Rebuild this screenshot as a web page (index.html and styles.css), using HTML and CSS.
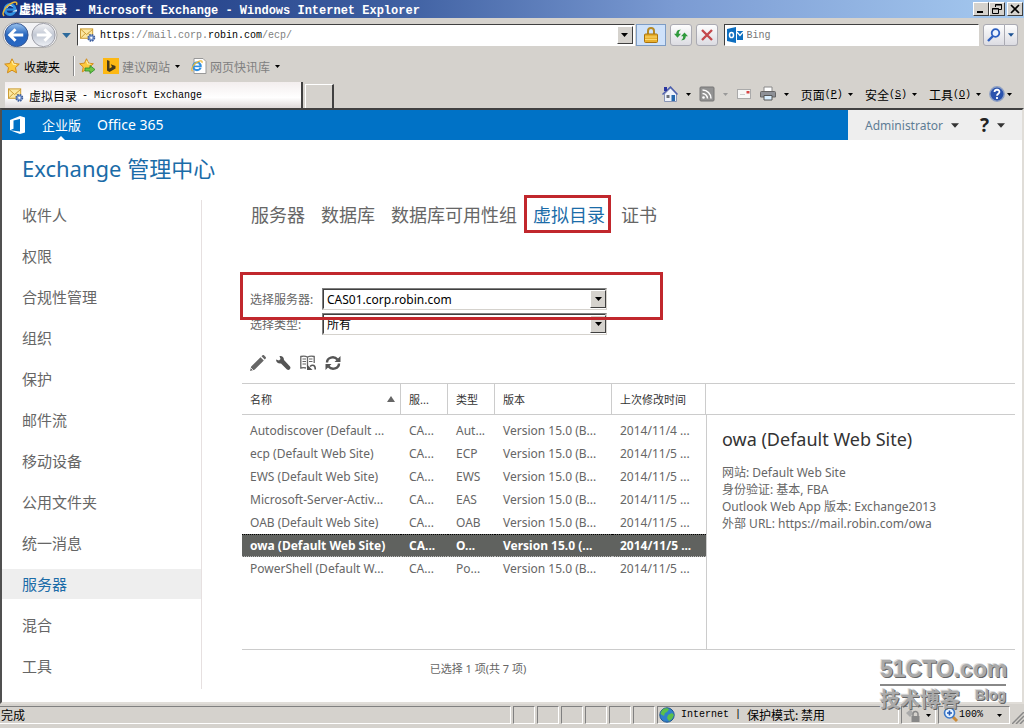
FILE: index.html
```html
<!DOCTYPE html>
<html lang="zh-CN">
<head>
<meta charset="utf-8">
<title>虚拟目录 - Microsoft Exchange</title>
<link rel="stylesheet" href="styles.css">
</head>
<body>
<svg class="defs" aria-hidden="true">
  <symbol id="ie" viewBox="0 0 16 16">
    <circle cx="8" cy="8.500" r="5" fill="none" stroke="#2f8fe0" stroke-width="3"/>
    <path d="M4 8.500h9" stroke="#2f8fe0" stroke-width="2.200"/>
    <path d="M10 10.500h5v-2z" fill="#d6e4f2"/>
    <path d="M5 7a3.200 3.200 0 0 1 5.500-1.500" stroke="#bfe4ff" fill="none"/>
    <path d="M2 15C-1 12 4 4 11 1.500c3-1 4.500 0 3.500 2.500" fill="none" stroke="#e8b637" stroke-width="1.500"/>
  </symbol>
  <symbol id="mail" viewBox="0 0 17 16">
    <rect x=".5" y="1.500" width="13" height="10" fill="#fbe7a0" stroke="#c9982e"/>
    <path d="M1 2l6 5.500L13.500 2M1 11l4.500-4.500M13 11L9 6.500" fill="none" stroke="#c9982e"/>
    <circle cx="12" cy="11" r="3.300" fill="#7d9bd0" stroke="#3f5f9d" stroke-width="1.800" stroke-dasharray="1.600 1"/>
    <circle cx="12" cy="11" r="1.200" fill="#fff"/>
  </symbol>
  <symbol id="down" viewBox="0 0 7 4"><path d="M0 0h7L3.500 4z" fill="currentColor"/></symbol>
  <symbol id="star" viewBox="0 0 16 16"><path d="M8 .8l2.200 4.700 5.100.6-3.800 3.500 1 5.200L8 12.200l-4.500 2.600 1-5.200L.7 6.100l5.100-.6z" fill="#fdc93d" stroke="#d08a1a"/><path d="M8 3l1.300 3.200 3 .4" fill="none" stroke="#fff0a8" stroke-width="1.200"/></symbol>
</svg>

<header class="chrome">
  <div class="titlebar">
    <svg class="i16"><use href="#ie"/></svg>
    <span class="title"><b class="cj">虚拟目录</b> - Microsoft Exchange - Windows Internet Explorer</span>
    <div class="winbtns">
      <button class="win" aria-label="最小化"><svg viewBox="0 0 12 10"><path d="M2 8h6" stroke="#000" stroke-width="2"/></svg></button>
      <button class="win" aria-label="还原"><svg viewBox="0 0 12 10"><path d="M4.500 3V.5h6v5H8M4 1h7M1.500 4.500h6v5h-6zM1 5h7" fill="none" stroke="#000"/></svg></button>
      <button class="win win-x" aria-label="关闭"><svg viewBox="0 0 12 10"><path d="M2 1l8 8M10 1L2 9" stroke="#000" stroke-width="1.700"/></svg></button>
    </div>
  </div>

  <div class="navbar">
    <div class="navbtns">
      <svg class="nav-arrows" viewBox="0 0 58 28" aria-hidden="true">
        <defs><linearGradient id="gb" x2="0" y2="1"><stop stop-color="#9cc4ef"/><stop offset=".5" stop-color="#2464bd"/><stop offset="1" stop-color="#2a68c4"/></linearGradient>
        <linearGradient id="gg" x2="0" y2="1"><stop stop-color="#f4f4f6"/><stop offset=".5" stop-color="#c2c8d4"/><stop offset="1" stop-color="#eef1f6"/></linearGradient></defs>
        <rect x="1" y="1" width="56" height="26" rx="13" fill="#f3f3f5" stroke="#aaa9a8"/>
        <circle cx="15" cy="14" r="12" fill="url(#gb)" stroke="#36558f"/>
        <path d="M8 14h14M14 8l-6 6 6 6" fill="none" stroke="#fff" stroke-width="3"/>
        <circle cx="43" cy="14" r="12" fill="url(#gg)" stroke="#9a9ca5"/>
        <path d="M36 14h14M44 8l6 6-6 6" fill="none" stroke="#fff" stroke-width="3"/>
      </svg>
      <svg class="tri-big"><use href="#down"/></svg>
    </div>
    <div class="address sunken">
      <svg class="i16"><use href="#mail"/></svg>
      <div class="url mono"><span class="dark">https</span>://mail.corp.<span class="dark">robin.com</span>/ecp/</div>
      <button class="drop" aria-label="地址列表"><svg class="tri"><use href="#down"/></svg></button>
    </div>
    <button class="lock" aria-label="安全报告"><svg viewBox="0 0 14 16"><path d="M4 8V4a3 3 0 0 1 6 0v4" fill="none" stroke="#b58a28" stroke-width="2"/><rect x=".5" y="7" width="13" height="8.500" rx="1" fill="#e8b02e" stroke="#a8720f"/><path d="M1 10h12M1 12.500h12" stroke="#fbd873"/></svg></button>
    <button class="soft" aria-label="刷新"><svg viewBox="0 0 16 14"><path d="M0 5.500h2.500C2.500 2.500 4.500.5 8 1 6 2 5.500 3.500 5.500 5.500H8L4 10z" fill="#2f9a3c"/><path d="M16 8.500h-2.500c0 3-2 5-5.500 4.500 2-1 2.500-2.500 2.500-4.500H8L12 4z" fill="#2f9a3c"/></svg></button>
    <button class="soft" aria-label="停止"><svg viewBox="0 0 14 14"><path d="M2 2l10 10M12 2L2 12" stroke="#c4484b" stroke-width="2.400"/></svg></button>
    <label class="search sunken">
      <svg class="i16" viewBox="0 0 16 16"><path d="M0 2l9-2v16l-9-2z" fill="#0e6fc0"/><path d="M10 4h6v9h-6z" fill="#0e6fc0"/><path d="M10 5l3 3.500L16 5" fill="none" stroke="#fff" stroke-width="1.300"/><ellipse cx="4.500" cy="8" rx="2" ry="2.600" fill="none" stroke="#fff" stroke-width="1.500"/></svg>
      <input class="mono" type="text" placeholder="Bing" aria-label="搜索">
    </label>
    <div class="go">
      <button class="soft wide" aria-label="搜索"><svg viewBox="0 0 14 14"><circle cx="8.500" cy="5" r="3.800" fill="#eaf3ff" stroke="#2c5fc0" stroke-width="1.800"/><path d="M6 8l-5 5" stroke="#2c5fc0" stroke-width="2.400"/></svg></button>
      <button class="soft narrow" aria-label="搜索选项"><svg class="tri"><use href="#down"/></svg></button>
    </div>
  </div>

  <div class="favbar">
    <svg class="i16"><use href="#star"/></svg><span class="cj">收藏夹</span>
    <i class="sep"></i>
    <svg class="i16" viewBox="0 0 16 16"><use href="#star" width="15" height="15"/><path d="M6 10h5V7.500l5 4-5 4V13H6z" fill="#6cc644" stroke="#2c8a2c" stroke-width=".8"/></svg>
    <svg class="i16 gap-s" viewBox="0 0 16 16"><path d="M0 0h16v16H0z" fill="#fdb813"/><path d="M4 2l2.500 1v7.500L9 9 7.800 6.200 12.500 8v2.500L6.500 14 4 12.500z" fill="#453a1c"/></svg>
    <span class="cj dim">建议网站</span><svg class="tri s"><use href="#down"/></svg>
    <svg class="i16 gap-m" viewBox="0 0 16 16"><path d="M3 .5h9l3 3v12H3z" fill="#fff" stroke="#999"/><use href="#ie" y="2" width="12" height="12"/></svg>
    <span class="cj dim">网页快讯库</span><svg class="tri s"><use href="#down"/></svg>
  </div>

  <div class="tabbar">
    <div class="tab"><svg class="i16"><use href="#mail"/></svg><span class="cj">虚拟目录</span><span class="mono">- Microsoft Exchange</span></div>
    <div class="newtab"></div>
    <div class="cmds">
      <svg class="i16" viewBox="0 0 16 16"><path d="M2.500 8v7.500h12V8L8.500 2z" fill="#eef2fb" stroke="#8794b5"/><path d="M.5 8.500l8-7.500 7 7.500" fill="none" stroke="#4d5fae" stroke-width="1.500"/><path d="M2 1h3v4H2z" fill="#2a35a0"/><path d="M9.500 9H13v6H9.500z" fill="#2768ad"/><path d="M4.500 9h3v3h-3z" fill="#6b7077"/></svg>
      <svg class="tri"><use href="#down"/></svg>
      <svg class="i16" viewBox="0 0 16 16"><rect x="1" y="1" width="14" height="14" rx="1" fill="#929292" stroke="#777"/><circle cx="4.500" cy="11.500" r="1.300" fill="#fff"/><path d="M3.500 7.500a5 5 0 0 1 5 5M3.500 4a8.500 8.500 0 0 1 8.500 8.500" fill="none" stroke="#fff" stroke-width="1.500"/></svg>
      <svg class="tri pale"><use href="#down"/></svg>
      <svg class="i16" viewBox="0 0 16 16"><rect x="1.500" y="3.500" width="13" height="9" fill="#f7f7f7" stroke="#aaa"/><path d="M10.500 5h3v2.500h-3z" fill="#d64545"/><path d="M4 8.500h5" stroke="#ccc"/></svg>
      <svg class="i16" viewBox="0 0 16 16"><path d="M4 1h8v5H4z" fill="#fff" stroke="#888"/><path d="M.5 6.500a1 1 0 0 1 1-1h13a1 1 0 0 1 1 1V11H.5z" fill="#8e9197" stroke="#666"/><path d="M4 9.500h8V14H4z" fill="#d9efff" stroke="#555"/></svg>
      <svg class="tri"><use href="#down"/></svg>
      <button class="cmd"><span class="cj">页面</span><span class="mono">(<u>P</u>)</span><svg class="tri s"><use href="#down"/></svg></button>
      <button class="cmd"><span class="cj">安全</span><span class="mono">(<u>S</u>)</span><svg class="tri s"><use href="#down"/></svg></button>
      <button class="cmd"><span class="cj">工具</span><span class="mono">(<u>O</u>)</span><svg class="tri s"><use href="#down"/></svg></button>
      <button class="cmd help" aria-label="帮助"><svg class="i16" viewBox="0 0 16 16"><circle cx="8" cy="8" r="7.200" fill="#2b53ad" stroke="#8ea0c4" stroke-width="1.400"/><path d="M5.500 6c.3-3.300 5.300-2.800 4.900.2C10.200 7.800 8 7.700 8 9.800M8 11v2" fill="none" stroke="#fff" stroke-width="1.800"/></svg><svg class="tri s"><use href="#down"/></svg></button>
    </div>
  </div>
</header>

<div class="page">
  <div class="suite">
    <nav class="suite-blue">
      <svg class="office" viewBox="0 0 16 18"><path d="M0 4l10-4 5 1.500v15L10 18 0 14.200l10 1.300V3L3.500 4.600v8.200L0 14.200z" fill="#fff"/></svg>
      <a class="on" href="#">企业版</a>
      <a class="o365" href="#">Office 365</a>
    </nav>
    <div class="suite-user">
      <button class="user">Administrator<svg class="tri-big"><use href="#down"/></svg></button>
      <button class="user q">?<svg class="tri-big"><use href="#down"/></svg></button>
    </div>
  </div>
  <h1>Exchange 管理中心</h1>
  <div class="cols">
    <nav class="side">
      <a href="#">收件人</a><a href="#">权限</a><a href="#">合规性管理</a><a href="#">组织</a><a href="#">保护</a><a href="#">邮件流</a><a href="#">移动设备</a><a href="#">公用文件夹</a><a href="#">统一消息</a><a class="cur" href="#">服务器</a><a href="#">混合</a><a href="#">工具</a>
    </nav>
    <main>
      <nav class="tabs">
        <a href="#">服务器</a><a href="#">数据库</a><a href="#">数据库可用性组</a><a class="cur" href="#">虚拟目录</a><a href="#">证书</a>
      </nav>
      <form class="filters">
        <label for="srv">选择服务器:</label>
        <div class="pick"><select id="srv"><option>CAS01.corp.robin.com</option></select><span class="drop"><svg class="tri"><use href="#down"/></svg></span></div>
        <label for="typ">选择类型:</label>
        <div class="pick"><select id="typ"><option>所有</option></select><span class="drop"><svg class="tri"><use href="#down"/></svg></span></div>
        <div class="mark"></div>
      </form>
      <div class="tools">
        <button aria-label="编辑"><svg viewBox="0 0 16 16"><path d="M0 16l1.200-4.500L10.500 2.200l3.300 3.300-9.300 9.300zM11.500 1.300l1-1c.5-.4 1-.4 1.500 0L15.700 2c.4.500.4 1 0 1.500l-1 1z" fill="#666"/><path d="M.8 12.800l2.400 2.400" stroke="#fff" stroke-width=".8"/></svg></button>
        <button aria-label="属性"><svg viewBox="0 0 16 16"><path d="M1 4.500L4 5.500 5.500 4 4.500 1C7 .6 9 2 9 5l6 6.500c1.500 2-1 4.500-3 3L6 8.500C3.500 9 1 7.500 1 4.500z" fill="#555"/></svg></button>
        <button aria-label="重置"><svg viewBox="0 0 16 16"><path d="M7.500 2v9.500M7.500 2C5.500 1 3 1 .8 1.500V13c2-.4 3.600-.4 5.200 0M7.500 2c2-1 4.500-1 6.700-.5V8" fill="none" stroke="#666" stroke-width="1.300"/><path d="M2.500 4H6M2.500 6.500H6M2.500 9H6M9 4h3.500M9 6.500h3.500" stroke="#666" stroke-width="1.200"/><path d="M15.200 14.500c.3-4-2.200-5.500-5.200-3" fill="none" stroke="#555" stroke-width="1.600"/><path d="M7 9.500l5.500 5.500H7z" fill="#555"/></svg></button>
        <button aria-label="刷新"><svg viewBox="0 0 16 16"><path d="M2 7.500C2 2.500 9 .5 12.500 4.500M14 8.500c0 5-7 7-10.500 3" fill="none" stroke="#555" stroke-width="2.400"/><path d="M15.500 1v6H9.500zM.5 15V9h6z" fill="#555"/></svg></button>
      </div>
      <div class="split">
        <table>
          <colgroup><col class="c1"><col class="c2"><col class="c2"><col class="c4"><col></colgroup>
          <thead><tr><th>名称<svg class="sort" viewBox="0 0 8 6"><path d="M4 0l4 6H0z" fill="#666"/></svg></th><th>服...</th><th>类型</th><th>版本</th><th>上次修改时间</th></tr></thead>
          <tbody>
            <tr><td>Autodiscover (Default ...</td><td>CA...</td><td>Aut...</td><td>Version 15.0 (B...</td><td>2014/11/4 ...</td></tr>
            <tr><td>ecp (Default Web Site)</td><td>CA...</td><td>ECP</td><td>Version 15.0 (B...</td><td>2014/11/5 ...</td></tr>
            <tr><td>EWS (Default Web Site)</td><td>CA...</td><td>EWS</td><td>Version 15.0 (B...</td><td>2014/11/5 ...</td></tr>
            <tr><td>Microsoft-Server-Activ...</td><td>CA...</td><td>EAS</td><td>Version 15.0 (B...</td><td>2014/11/5 ...</td></tr>
            <tr><td>OAB (Default Web Site)</td><td>CA...</td><td>OAB</td><td>Version 15.0 (B...</td><td>2014/11/5 ...</td></tr>
            <tr class="sel"><td>owa (Default Web Site)</td><td>CA...</td><td>O...</td><td>Version 15.0 (...</td><td>2014/11/5 ...</td></tr>
            <tr><td>PowerShell (Default W...</td><td>CA...</td><td>Po...</td><td>Version 15.0 (B...</td><td>2014/11/5 ...</td></tr>
          </tbody>
        </table>
        <section class="detail">
          <div class="detail-head"></div>
          <div class="detail-body">
            <h2>owa (Default Web Site)</h2>
            <p>网站: Default Web Site</p>
            <p>身份验证: 基本, FBA</p>
            <p>Outlook Web App 版本: Exchange2013</p>
            <p>外部 URL: https://mail.robin.com/owa</p>
          </div>
        </section>
      </div>
      <div class="count">已选择 1 项(共 7 项)</div>
    </main>
  </div>
</div>

<footer class="status">
  <div class="cell done">完成</div>
  <div class="cell box"></div><div class="cell box"></div><div class="cell box"></div><div class="cell box"></div><div class="cell box"></div><div class="cell box"></div>
  <div class="cell zone"><svg class="i16" viewBox="0 0 16 16"><circle cx="8" cy="8" r="7.200" fill="#2f7fcb" stroke="#1f568f"/><path d="M3 3c3-2.500 6-2 7-.5L8 5 6 6 5 9 1.500 7zM9 8l4-2 2 2-2 4-3 2-2-3z" fill="#5cc04a"/></svg><span class="mono">Internet |</span><span>保护模式: 禁用</span></div>
  <div class="cell prot"><svg class="i16" viewBox="0 0 16 16"><path d="M1 6l5-4 2 5-3 3z" fill="#aaa"/><path d="M8 9V7a2.500 2.500 0 0 1 5 0v2" fill="none" stroke="#888" stroke-width="1.500"/><path d="M6.500 9h8v6h-8z" fill="#888"/></svg><svg class="tri s"><use href="#down"/></svg></div>
  <div class="cell zoomc"><svg class="i16" viewBox="0 0 16 16"><path d="M9 9l5 5" stroke="#c98a3a" stroke-width="3"/><circle cx="6.500" cy="6" r="5" fill="#e8f4ff" stroke="#3c78c8" stroke-width="1.600"/><path d="M4 6h5M6.500 3.500v5" stroke="#2159b5" stroke-width="1.600"/></svg><span class="mono">100%</span><svg class="tri s"><use href="#down"/></svg></div>
  <svg class="grip" viewBox="0 0 12 12"><path d="M0 12L12 0M4 12l8-8M8 12l4-4" stroke="#888" stroke-width="1.500"/></svg>
</footer>

<div class="watermark" aria-hidden="true">
  <div class="wm1">51CTO.com</div>
  <div class="wm2"><span>技术博客</span><b>Blog</b></div>
</div>
</body>
</html>
```
FILE: styles.css
```css
*, *::before, *::after { box-sizing: border-box; }
body {
  margin: 0;
  min-height: 100vh;
  display: flex;
  flex-direction: column;
  position: relative;
  background: #d5d2cd;
  color: #000;
  font: 12px "Noto Sans", "Noto Sans CJK SC", sans-serif;
}
button, input, select { font: inherit; color: inherit; margin: 0; padding: 0; border: 0; background: none; }
a { color: inherit; text-decoration: none; }
h1, h2, p { margin: 0; font-weight: 400; }
.defs { position: absolute; width: 0; height: 0; }
.i16 { width: 16px; height: 16px; flex: none; }
.tri { width: 5px; height: 3px; flex: none; }
.tri-big { width: 8px; height: 5px; flex: none; }
.mono { font-family: "Liberation Mono", "Noto Sans CJK SC", monospace; font-size: 10px; }
.cj { font-size: 12px; font-family: "Noto Sans CJK SC", sans-serif; }

/* browser chrome */
.titlebar {
  height: 18px;
  display: flex;
  align-items: center;
  gap: 1px;
  padding: 0 1px 0 2px;
  background: linear-gradient(90deg, #15307c, #3d5ea0 38%, #7b9bd3 66%, #a6caf0);
}
.title { color: #fff; font: bold 12px "Liberation Mono", monospace; white-space: nowrap; flex: 1; }
.winbtns { display: flex; }
.win { width: 16px; height: 14px; background: #d5d2cd; border: 1px solid; border-color: #fff #404040 #404040 #fff; display: grid; place-items: center; }
.win svg { width: 12px; height: 10px; }
.win-x { margin-left: 2px; }

.navbar { height: 34px; display: flex; align-items: center; padding: 0 6px 0 2px; }
.navbtns { width: 75px; display: flex; align-items: center; justify-content: space-between; padding-right: 6px; }
.nav-arrows { width: 56px; height: 28px; }
.navbtns .tri-big { color: #2d6a9c; width: 9px; }
.sunken { background: #fff; border: 1px solid; border-color: #404040 #fff #fff #404040; height: 22px; display: flex; align-items: center; }
.address { flex: 558; padding: 0 1px 0 2px; gap: 4px; }
.url { flex: 1; color: #808080; }
.dark { color: #000; }
.drop { width: 16px; height: 18px; background: #d5d2cd; border: 1px solid; border-color: #fff #404040 #404040 #fff; display: grid; place-items: center; color: #000; }
.drop .tri { width: 7px; height: 4px; }
.lock { width: 30px; height: 22px; margin: 0 4px 0 1px; background: #cfe2fa; border: 1px solid #7d9cc4; display: grid; place-items: center; }
.lock svg { width: 14px; height: 16px; }
.soft { width: 22px; height: 22px; margin-right: 4px; border: 1px solid #aaaab2; border-radius: 3px; background: linear-gradient(#fdfdfd, #dcdce2); display: grid; place-items: center; }
.soft svg { width: 14px; height: 14px; }
.search { flex: 254; margin: 0 4px 0 2px; padding-left: 2px; gap: 4px; }
.search input { flex: 1; min-width: 0; outline: 0; }
.search input::placeholder { color: #777; opacity: 1; }
.go { display: flex; }
.go .wide { margin: 0; border-radius: 3px 0 0 3px; }
.go .narrow { width: 13px; margin: 0; border-left: 0; border-radius: 0 3px 3px 0; }
.soft .tri { width: 6px; height: 4px; color: #1d5292; }

.favbar { height: 28px; display: flex; align-items: center; padding-left: 4px; }
.favbar .cj { margin-left: 4px; }
.sep { width: 2px; height: 20px; margin: 0 4px 0 13px; border-left: 1px solid #888; border-right: 1px solid #fff; }
.favbar .dim { color: #808080; margin-left: 3px; }
.tri.s { margin-left: 5px; }
.gap-s { margin-left: 8px; }
.gap-m { margin-left: 11px; }

.tabbar { height: 28px; display: flex; align-items: flex-end; padding-left: 5px; }
.tab { width: 298px; height: 26px; display: flex; align-items: center; gap: 5px; padding-left: 3px; background: linear-gradient(#f3eeee, #fff 60%, #ddd8d8); border-right: 2px solid #404040; white-space: nowrap; }
.newtab { width: 29px; height: 24px; margin-left: 2px; border: 1px solid #fff; border-right: 2px solid #404040; border-bottom: 0; }
.cmds { height: 28px; margin-left: auto; display: flex; align-items: center; gap: 8px; padding-right: 12px; }
.cmd { display: flex; align-items: center; margin-left: 4px; }
.cmds .help { margin-left: 0; }
.help .tri { margin-left: 2px; }
.pale { color: #999; }

/* admin center */
.page { flex: 1; display: flex; flex-direction: column; background: #fff; border: 2px solid; border-color: #404040 #e0ddd8 #e0ddd8 #505050; color: #666; }
.suite { display: flex; height: 30px; }
.suite-blue { flex: 1; display: flex; align-items: center; background: #0072c6; color: #fff; font-size: 13px; padding-left: 8px; }
.suite-blue a { position: relative; height: 30px; line-height: 30px; margin-left: 16px; }
.suite-blue .on::after { content: ""; position: absolute; left: 15px; bottom: 0; border: 4px solid transparent; border-bottom-color: #fff; border-top: 0; }
.suite-blue .o365 { font-size: 14px; }
.office { width: 16px; height: 18px; }
.suite-user { width: 174px; background: #eee; display: flex; align-items: center; justify-content: space-between; padding: 0 17px; }
.user { display: flex; align-items: center; gap: 8px; color: #5e7d95; }
.user .tri-big { color: #333; }
.q { font-size: 19px; font-weight: 700; color: #222; }
h1 { font-size: 22px; line-height: 32px; padding: 12px 0 16px 20px; color: #1b6ca8; }
.cols { flex: 1; display: flex; }
.side { width: 200px; display: flex; flex-direction: column; gap: 11px; border-right: 1px solid #e6e0e0; margin-bottom: 13px; }
.side a { height: 30px; line-height: 30px; padding-left: 20px; font-size: 15px; color: #666; }
.side .cur { background: #eee; color: #1b6ca8; }
main { flex: 1; min-width: 0; padding: 0 7px 0 40px; display: flex; flex-direction: column; }
.tabs { display: flex; gap: 16px; padding-left: 9px; font-size: 18px; line-height: 30px; }
.tabs .cur { position: relative; color: #1b6ca8; }
.tabs .cur::after { content: ""; position: absolute; left: -9px; right: -6px; top: -5px; height: 38px; border: 3px solid #c1272d; }
.filters { position: relative; width: 365px; display: grid; grid-template-columns: 72px 1fr; row-gap: 3px; align-items: center; padding-left: 8px; margin-top: 58px; }
.pick { position: relative; height: 22px; border: 1px solid; border-color: #808080 #d5d2cd #d5d2cd #808080; }
.pick select { appearance: none; width: 100%; height: 20px; border: 1px solid; border-color: #404040 #fff #fff #404040; padding-left: 3px; color: #000; background: #fff; }
.pick .drop { position: absolute; right: 0; top: 1px; pointer-events: none; }
.mark { position: absolute; left: -2px; top: -16px; width: 423px; height: 48px; border: 3px solid #c1272d; pointer-events: none; }
.tools { display: flex; gap: 9px; padding-left: 8px; margin: 20px 0 12px; }
.tools button, .tools svg { display: block; width: 16px; height: 16px; }
.split { flex: 1; display: flex; border-top: 1px solid #ccc; border-bottom: 1px solid #ccc; }
table { width: 464px; table-layout: fixed; border-collapse: separate; border-spacing: 0; align-self: flex-start; }
.c1 { width: 159px; }
.c2 { width: 47px; }
.c4 { width: 117px; }
th, td { text-align: left; padding: 0 0 0 8px; white-space: nowrap; overflow: hidden; }
th { position: relative; height: 31px; font-size: 11px; font-weight: 400; color: #333; border-right: 1px solid #ccc; border-bottom: 1px solid #ccc; }
.sort { position: absolute; right: 5px; top: 12px; width: 8px; height: 6px; }
tbody::before { content: ""; display: table-row; height: 4px; }
td { height: 23px; }
.sel td { background: #60625f; color: #fff; font-weight: 700; border-top: 1px dotted #000; border-bottom: 1px dotted #bbb; }
.detail { flex: 1; display: flex; flex-direction: column; }
.detail-head { height: 31px; border-bottom: 1px solid #ccc; }
.detail-body { flex: 1; border-left: 1px solid #ccc; padding: 10px 0 0 15px; line-height: 17px; }
h2 { font-size: 18px; line-height: 28px; color: #333; margin-bottom: 11px; }
.count { width: 472px; height: 52px; padding-top: 10px; text-align: center; font-size: 11px; }

/* status bar */
.status { height: 24px; display: flex; gap: 2px; padding: 2px 0 4px; font-family: "Noto Sans CJK SC", sans-serif; }
.cell { border: 1px solid; border-color: #808080 #fff #fff #808080; display: flex; align-items: center; line-height: 16px; }
.done { flex: 1; border-left: 0; padding-left: 1px; }
.box { width: 22px; }
.zone { width: 242px; gap: 6px; padding-left: 1px; }
.prot { width: 35px; padding-left: 3px; }
.zoomc { width: 72px; padding-left: 4px; }
.zoomc .tri { margin-left: 14px; }
.grip { width: 12px; height: 12px; align-self: flex-end; }

.watermark { position: absolute; right: 18px; bottom: 16px; width: 126px; color: #aaa; text-shadow: 1px 1px 0 #666, -1px -1px 0 #ddd; white-space: nowrap; }
.wm1 { font: bold 23px/30px "Liberation Sans", sans-serif; border-bottom: 2px solid #888; }
.wm2 { display: flex; justify-content: space-between; font: bold 20px/26px "Noto Sans CJK SC", sans-serif; }
.wm2 b { font: bold 14px/18px "Liberation Sans", sans-serif; }
```
